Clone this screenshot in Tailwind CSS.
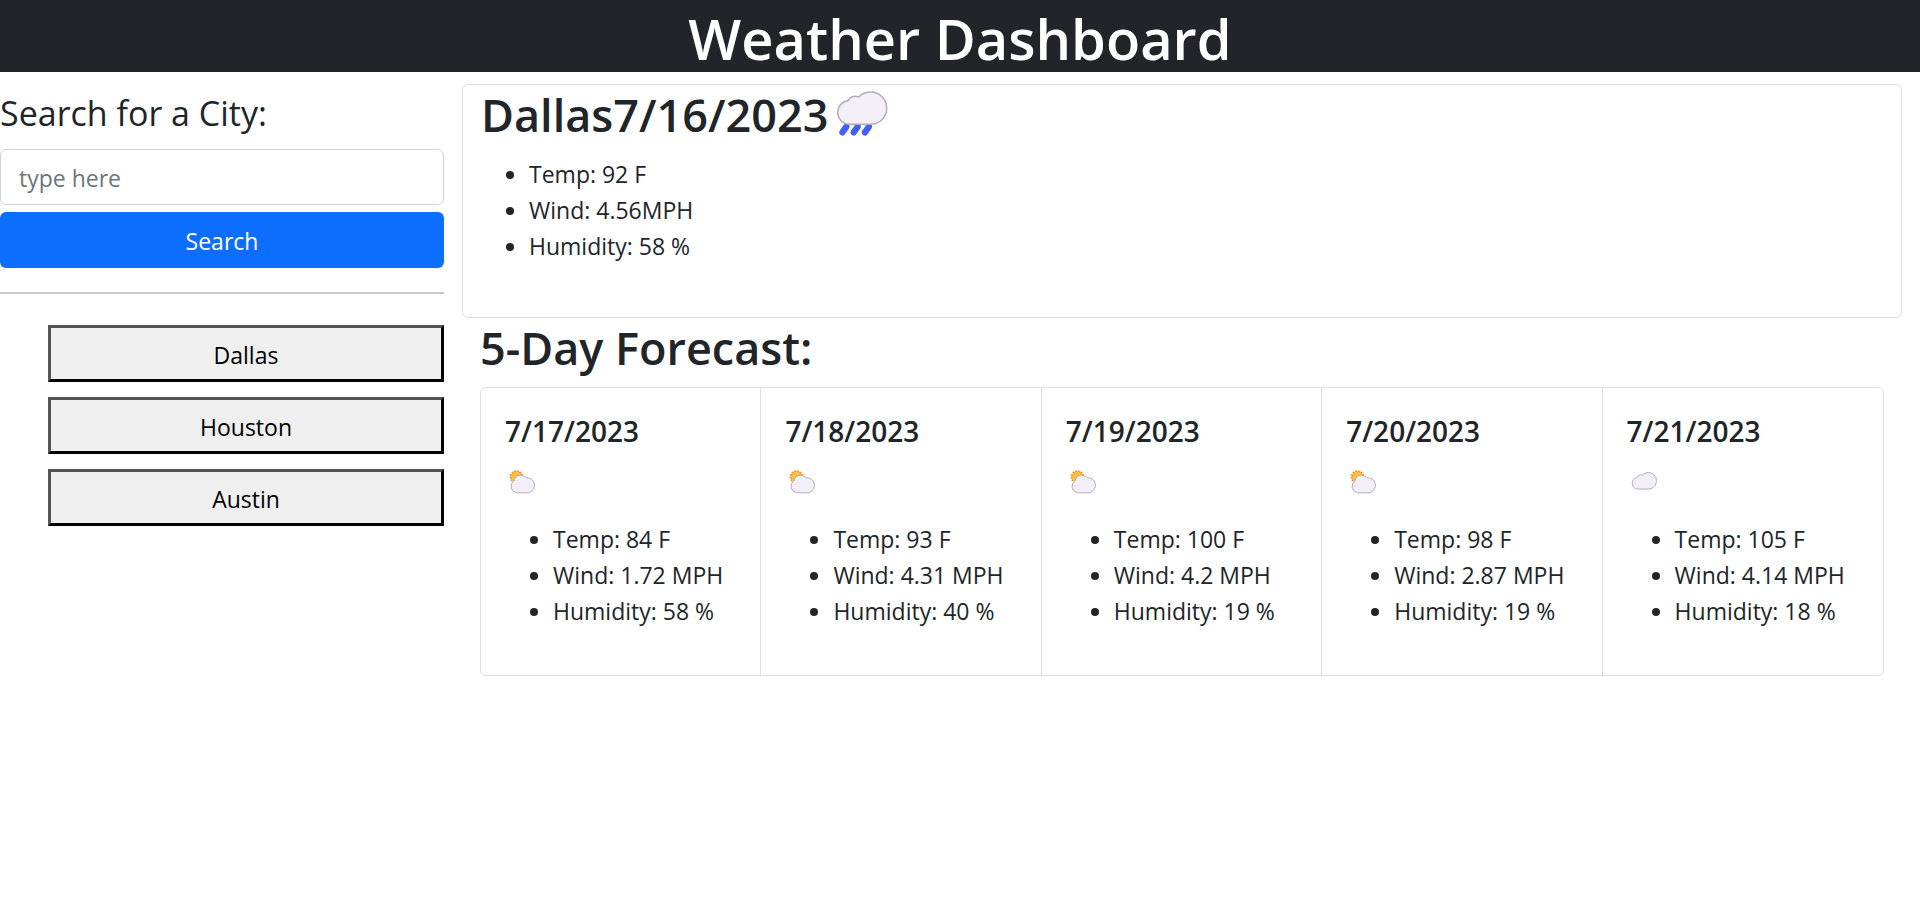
<!DOCTYPE html>
<html lang="en">
<head>
<meta charset="utf-8">
<meta name="viewport" content="width=device-width, initial-scale=1">
<title>Weather Dashboard</title>
<script src="https://cdn.jsdelivr.net/npm/@tailwindcss/browser@4"></script>
</head>
<body class="bg-white font-['Open_Sans',sans-serif] text-[23px] leading-9 text-[#212529]">
<svg class="hidden" aria-hidden="true">
  <symbol id="partly" viewBox="0 0 26 24">
    <circle cx="7.5" cy="7" r="5.8" fill="#f9c23c"/>
    <circle cx="7.5" cy="7" r="6" fill="none" stroke="#ff822d" stroke-width="1.6" stroke-dasharray="1.8 1"/>
    <path d="M7.500 22.800A6.600 6.600 0 0 1 5 10.800C6 6.600 9 5 12 5.300c2.200.2 4 1.300 5.200 2.500 5-.4 8.200 3.200 8.200 7.400 0 4.400-3.200 7.600-7.400 7.600z" fill="#f3eef8" stroke="#b4acbc"/>
  </symbol>
  <symbol id="cloud" viewBox="0 0 26 18">
    <path d="M6.300 17A5.800 5.800 0 0 1 5.800 5.600C7 3.200 9 2.600 11.500 3 13 1.300 15 .6 17.300.6c4.600 0 8.100 3.500 8.100 8.100S22 17 17.500 17z" fill="#f3eef8" stroke="#b4acbc"/>
  </symbol>
  <symbol id="rain" viewBox="0 0 52 46">
    <path d="M6.500 41.300l3.800-5.600M17.800 41.300l3.800-5.600M29 41.300l3.800-5.600" stroke="#4060ff" stroke-width="6.400" stroke-linecap="round"/>
    <path d="M13 33.300A12 12 0 0 1 12.300 9.400C14 5.800 18.500 4.500 22.500 6 26 2.500 30 1 34.500 1 43.800 1 50.700 8.200 50.700 17.200 50.700 26.500 43.500 33.300 34.500 33.300z" fill="#f3eef8" stroke="#b4acbc" stroke-width="1.500"/>
  </symbol>
</svg>

<header class="bg-[#212529] text-center">
  <h1 class="pt-1 text-[56px] leading-[68px] pt-1 font-semibold text-white">Weather Dashboard</h1>
</header>

<main class="-ml-[18px] mr-[18px] mt-3 grid grid-cols-4">
  <aside class="px-[18px]">
    <form onsubmit="return false">
      <label for="city" class="mb-2.5 block pt-1 text-[34px] leading-[51px]">Search for a City:</label>
      <input id="city" type="text" placeholder="type here" class="mb-[7px] block h-14 w-full rounded-md border border-[#ced4da] px-[18px] pt-0.5 placeholder:text-[#6c757d]">
      <button type="submit" class="block h-14 w-full rounded-md bg-[#0d6efd] pt-0.5 text-white">Search</button>
    </form>
    <hr class="mt-6 border-t-2 border-[#c8c9ca]">
    <ul class="mt-[31px] flex flex-col gap-[15px] pl-12 text-black">
      <li><button type="button" class="block h-[57px] w-full border-[3px] border-t-[#555] border-r-black border-b-black border-l-[#555] bg-[#efefef] pt-0.5">Dallas</button></li>
      <li><button type="button" class="block h-[57px] w-full border-[3px] border-t-[#555] border-r-black border-b-black border-l-[#555] bg-[#efefef] pt-0.5">Houston</button></li>
      <li><button type="button" class="block h-[57px] w-full border-[3px] border-t-[#555] border-r-black border-b-black border-l-[#555] bg-[#efefef] pt-0.5">Austin</button></li>
    </ul>
  </aside>

  <div class="col-span-3">
    <section class="rounded-md border border-[#dfdfdf] px-[18px] pb-[53px]">
      <h2 class="flex gap-2 pb-[11px] text-[45px] leading-[60px] font-semibold">Dallas7/16/2023<svg class="mt-1.5 h-[46px] w-[52px]" role="img" aria-label="Rain"><use href="#rain"/></svg></h2>
      <ul class="list-disc pl-12">
        <li>Temp: 92 F</li>
        <li>Wind: 4.56MPH</li>
        <li>Humidity: 58 %</li>
      </ul>
    </section>

    <section class="px-[18px]">
      <h2 class="mb-[9px] text-[45px] leading-[60px] font-semibold">5-Day Forecast:</h2>
      <div class="grid grid-cols-5 divide-x divide-[#dfdfdf] rounded-md border border-[#dfdfdf]">
        <article class="px-6 pt-[25px] pb-[46px]">
          <h3 class="text-[28px] leading-9 font-semibold">7/17/2023</h3>
          <svg class="mt-[21px] mb-[27px] ml-1 h-6 w-[26px]" role="img" aria-label="Partly cloudy"><use href="#partly"/></svg>
          <ul class="list-disc pl-12 whitespace-nowrap">
            <li>Temp: 84 F</li>
            <li>Wind: 1.72 MPH</li>
            <li>Humidity: 58 %</li>
          </ul>
        </article>
        <article class="px-6 pt-[25px] pb-[46px]">
          <h3 class="text-[28px] leading-9 font-semibold">7/18/2023</h3>
          <svg class="mt-[21px] mb-[27px] ml-1 h-6 w-[26px]" role="img" aria-label="Partly cloudy"><use href="#partly"/></svg>
          <ul class="list-disc pl-12 whitespace-nowrap">
            <li>Temp: 93 F</li>
            <li>Wind: 4.31 MPH</li>
            <li>Humidity: 40 %</li>
          </ul>
        </article>
        <article class="px-6 pt-[25px] pb-[46px]">
          <h3 class="text-[28px] leading-9 font-semibold">7/19/2023</h3>
          <svg class="mt-[21px] mb-[27px] ml-1 h-6 w-[26px]" role="img" aria-label="Partly cloudy"><use href="#partly"/></svg>
          <ul class="list-disc pl-12 whitespace-nowrap">
            <li>Temp: 100 F</li>
            <li>Wind: 4.2 MPH</li>
            <li>Humidity: 19 %</li>
          </ul>
        </article>
        <article class="px-6 pt-[25px] pb-[46px]">
          <h3 class="text-[28px] leading-9 font-semibold">7/20/2023</h3>
          <svg class="mt-[21px] mb-[27px] ml-1 h-6 w-[26px]" role="img" aria-label="Partly cloudy"><use href="#partly"/></svg>
          <ul class="list-disc pl-12 whitespace-nowrap">
            <li>Temp: 98 F</li>
            <li>Wind: 2.87 MPH</li>
            <li>Humidity: 19 %</li>
          </ul>
        </article>
        <article class="px-6 pt-[25px] pb-[46px]">
          <h3 class="text-[28px] leading-9 font-semibold">7/21/2023</h3>
          <svg class="mt-[23px] mb-[31px] ml-1 h-[18px] w-[26px]" role="img" aria-label="Cloudy"><use href="#cloud"/></svg>
          <ul class="list-disc pl-12 whitespace-nowrap">
            <li>Temp: 105 F</li>
            <li>Wind: 4.14 MPH</li>
            <li>Humidity: 18 %</li>
          </ul>
        </article>
      </div>
    </section>
  </div>
</main>
</body>
</html>
